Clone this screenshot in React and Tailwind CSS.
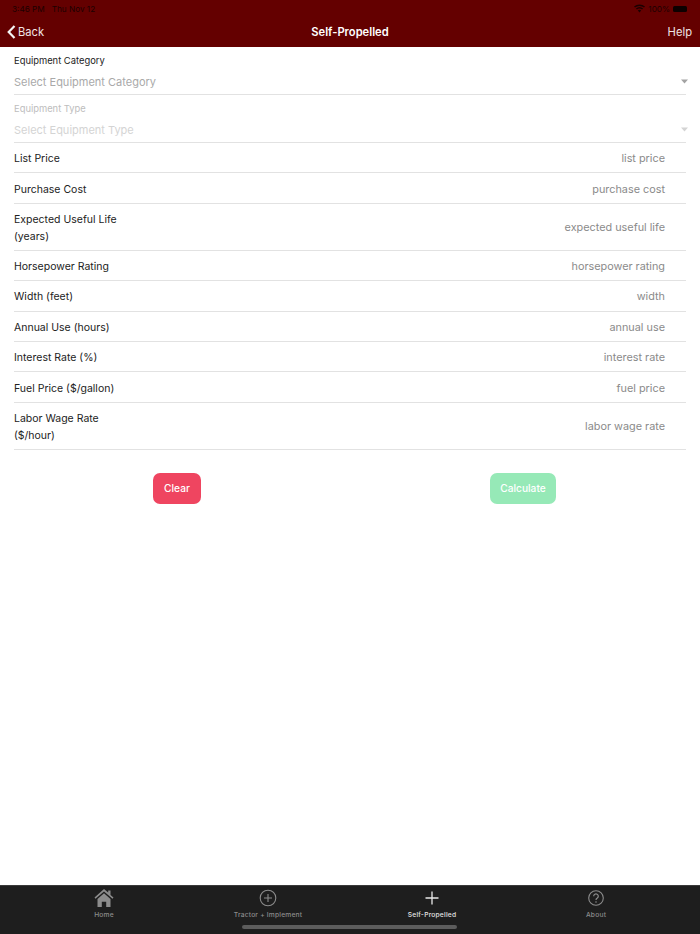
import React from "react";

const F = "[font-family:Inter,'Liberation_Sans',sans-serif]";

function Row({ label, sub, placeholder }) {
  return (
    <div className={`flex items-center justify-between border-b border-[#e2e2e2] ${sub ? "h-[46.8px]" : "h-[30.45px]"}`}>
      <div className="pt-[2px] text-[10.5px] leading-[17px] text-[#222]">
        <div>{label}</div>
        {sub && <div>{sub}</div>}
      </div>
      <div className="pt-[2px] pr-[21px] text-[10.85px] leading-[17px] text-[#8a8a8a]">{placeholder}</div>
    </div>
  );
}

function Select({ label, placeholder, disabled }) {
  return (
    <div className="relative h-[48px] border-b border-[#e2e2e2]">
      <div className={`pt-[7px] text-[9.4px] leading-[13px] ${disabled ? "text-[#bdbdbd]" : "text-[#222]"}`}>{label}</div>
      <div className={`mt-[7px] text-[11px] leading-[16px] ${disabled ? "text-[#d4d4d4]" : "text-[#a9a9a9]"}`}>{placeholder}</div>
      <svg className="absolute right-[-2px] top-[32px]" width="7" height="5" viewBox="0 0 7 5">
        <path d="M0 0.5h7L3.5 4.5z" fill={disabled ? "#d4d4d4" : "#a3a3a3"} />
      </svg>
    </div>
  );
}

function Tab({ icon, label, active }) {
  return (
    <div className="flex flex-col items-center">
      <div className="flex h-[23px] items-center justify-center">{icon}</div>
      <div className={`mt-[2px] text-[6.7px] leading-[9px] font-medium tracking-[0.2px] ${active ? "text-[#e4e4e4]" : "text-[#8c8c8c]"}`}>{label}</div>
    </div>
  );
}

export default function App() {
  return (
    <div className={`flex h-[934px] w-[700px] flex-col bg-white ${F}`}>
      <header className="relative h-[47px] shrink-0 bg-[#640000]">
        <div className="flex h-[17px] items-center justify-between pt-[1px] pl-[12px] pr-[13px] text-[8.2px] text-[#1c0000]">
          <div className="flex gap-[7px]">
            <span>3:46 PM</span>
            <span>Thu Nov 12</span>
          </div>
          <div className="flex items-center gap-[3px]">
            <svg width="11" height="9" viewBox="0 0 11 9" fill="#1c0000">
              <path d="M5.5 8.5 3.8 6.6a2.5 2.5 0 0 1 3.4 0zM2.9 5.6l-1-1.1a5.4 5.4 0 0 1 7.2 0l-1 1.1a4 4 0 0 0-5.2 0zM1 3.6 0 2.5a8.2 8.2 0 0 1 11 0l-1 1.1a6.8 6.8 0 0 0-9 0z" />
            </svg>
            <span>100%</span>
            <div className="h-[6px] w-[14px] rounded-[1.5px] bg-[#0c0000]" />
          </div>
        </div>
        <div className="relative flex h-[30px] items-center justify-between pl-[7px] pr-[8px] pt-[1px] text-[11.2px] text-[#f0e4e4]">
          <div className="flex items-center gap-[2px]">
            <svg width="9" height="14" viewBox="0 0 9 14" fill="none">
              <path d="M7.5 1 1.7 7l5.8 6" stroke="#f4f4f4" strokeWidth="2.2" />
            </svg>
            <span>Back</span>
          </div>
          <span>Help</span>
          <div className="absolute inset-x-0 top-0 flex h-[30px] items-center justify-center pt-[1px] font-semibold text-white">Self-Propelled</div>
        </div>
      </header>

      <main className="flex-1 px-[14px]">
        <Select label="Equipment Category" placeholder="Select Equipment Category" />
        <Select label="Equipment Type" placeholder="Select Equipment Type" disabled />
        <Row label="List Price" placeholder="list price" />
        <Row label="Purchase Cost" placeholder="purchase cost" />
        <Row label="Expected Useful Life" sub="(years)" placeholder="expected useful life" />
        <Row label="Horsepower Rating" placeholder="horsepower rating" />
        <Row label="Width (feet)" placeholder="width" />
        <Row label="Annual Use (hours)" placeholder="annual use" />
        <Row label="Interest Rate (%)" placeholder="interest rate" />
        <Row label="Fuel Price ($/gallon)" placeholder="fuel price" />
        <Row label="Labor Wage Rate" sub="($/hour)" placeholder="labor wage rate" />
        <div className="-mx-[10px] mt-[23px] grid grid-cols-2">
          <div className="flex justify-center">
            <button className="h-[31px] w-[48px] rounded-[7px] bg-[#ef4560] text-[10.2px] font-medium text-white">Clear</button>
          </div>
          <div className="flex justify-center">
            <button className="h-[31px] w-[66px] rounded-[7px] bg-[#96e9b7] text-[10.2px] font-medium text-white">Calculate</button>
          </div>
        </div>
      </main>

      <footer className="relative h-[49px] shrink-0 border-t border-[#3a3a3a] bg-[#1e1e1e]">
        <div className="grid grid-cols-4 px-[22px]">
          <Tab
            label="Home"
            icon={
              <svg width="20" height="20" viewBox="0 0 20 20" fill="#8c8c8c">
                <path d="M10 1 0.5 9.5l1 1.2L10 3.4l8.5 7.3 1-1.2-3-2.6V2.5h-2.3v2zM3.5 11 10 5.3l6.5 5.7v8h-4.3v-5.2H7.8V19H3.5z" />
              </svg>
            }
          />
          <Tab
            label="Tractor + Implement"
            icon={
              <svg width="18" height="18" viewBox="0 0 18 18" fill="none" stroke="#8c8c8c">
                <circle cx="9" cy="9" r="7.8" strokeWidth="1.1" />
                <path d="M9 5v8M5 9h8" strokeWidth="1.1" />
              </svg>
            }
          />
          <Tab
            active
            label="Self-Propelled"
            icon={
              <svg width="14" height="14" viewBox="0 0 14 14" fill="none" stroke="#e8e8e8">
                <path d="M7 0.5v13M0.5 7h13" strokeWidth="1.3" />
              </svg>
            }
          />
          <Tab
            label="About"
            icon={
              <svg width="16" height="16" viewBox="0 0 16 16" fill="none" stroke="#8c8c8c">
                <circle cx="8" cy="8" r="7.3" strokeWidth="1.1" />
                <path d="M5.7 6.2a2.3 2.3 0 1 1 3.6 1.9c-.8.5-1.3 1-1.3 2" strokeWidth="1.2" />
                <circle cx="8" cy="12" r=".8" fill="#8c8c8c" stroke="none" />
              </svg>
            }
          />
        </div>
        <div className="absolute bottom-[5px] left-[242px] h-[4px] w-[215px] rounded-full bg-[#5c5c5c]" />
      </footer>
    </div>
  );
}
